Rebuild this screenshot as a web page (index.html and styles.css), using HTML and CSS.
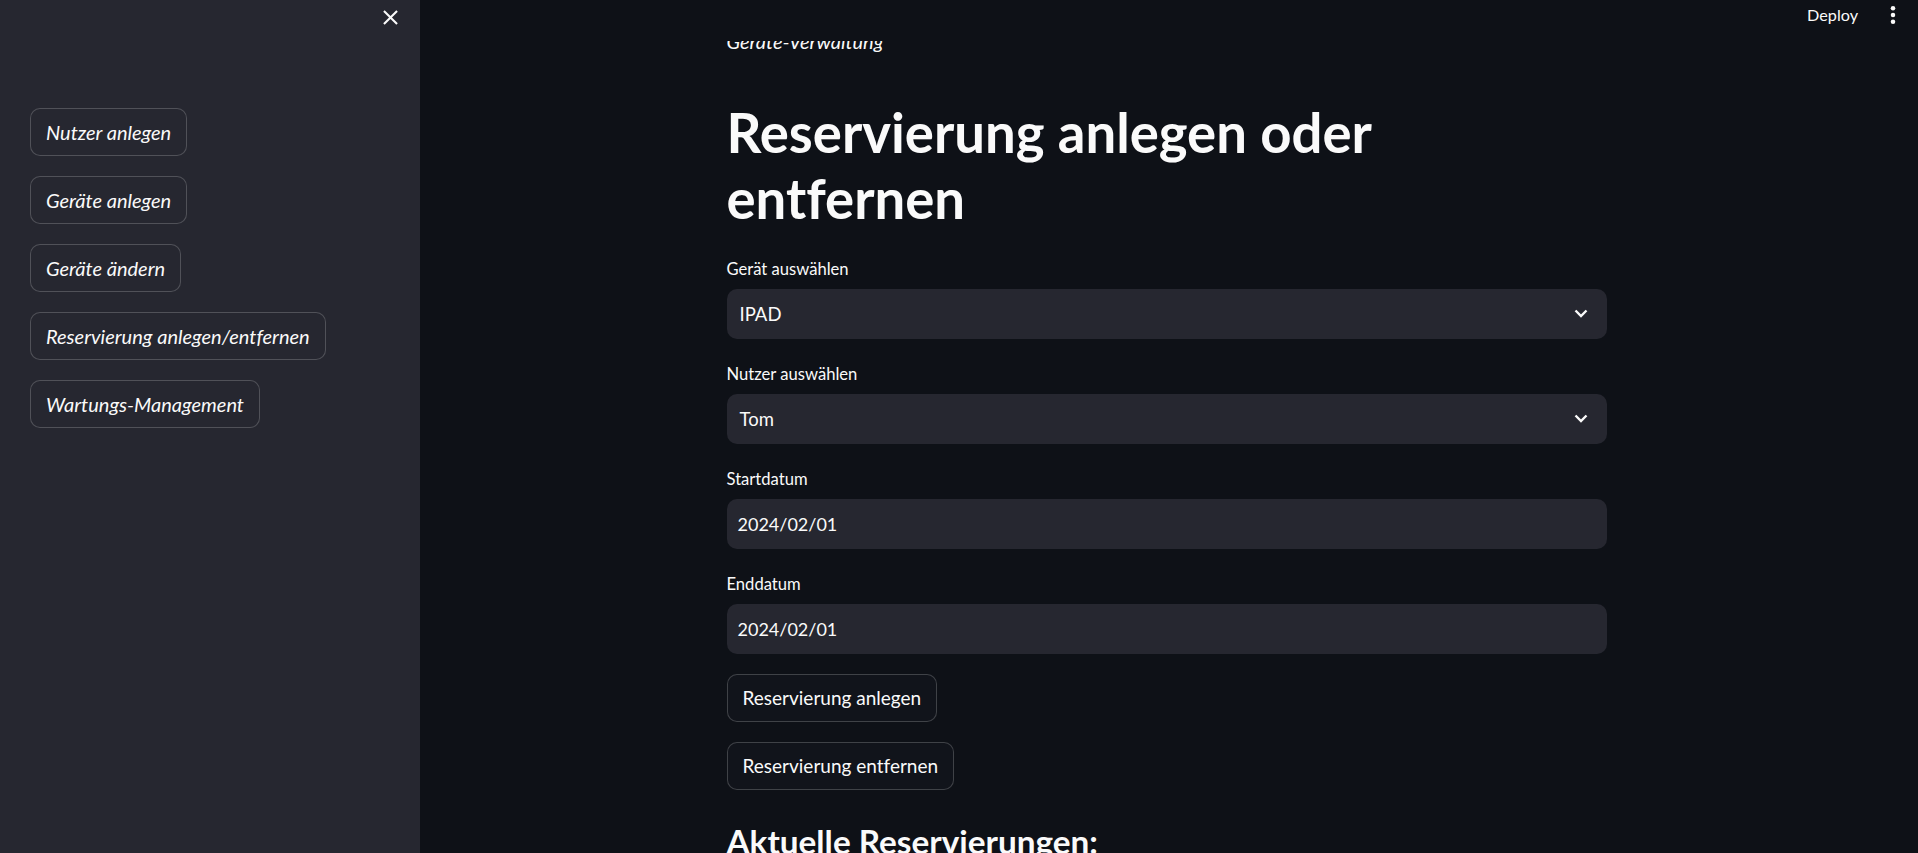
FILE: index.html
```html
<!DOCTYPE html>
<html lang="de">
<head>
<meta charset="utf-8">
<title>Geräte-Verwaltung</title>
<link rel="stylesheet" href="styles.css">
</head>
<body>
<div class="app">
  <aside class="sidebar">
    <div class="sidebar-top">
      <button class="close-btn" aria-label="Schließen">
        <svg viewBox="0 0 24 24" width="25" height="25"><path fill="#fafafa" d="M19 6.41L17.59 5 12 10.59 6.41 5 5 6.41 10.59 12 5 17.59 6.41 19 12 13.41 17.59 19 19 17.59 13.41 12z"/></svg>
      </button>
    </div>
    <nav class="nav">
      <button class="nav-btn">Nutzer anlegen</button>
      <button class="nav-btn">Geräte anlegen</button>
      <button class="nav-btn">Geräte ändern</button>
      <button class="nav-btn">Reservierung anlegen/entfernen</button>
      <button class="nav-btn">Wartungs-Management</button>
    </nav>
  </aside>
  <main class="main">
    <header class="header">
      <span class="deploy">Deploy</span>
      <svg class="menu" viewBox="0 0 24 24" width="26" height="26"><circle cx="12" cy="5.8" r="2.1" fill="#fafafa"/><circle cx="12" cy="12" r="2.1" fill="#fafafa"/><circle cx="12" cy="18.2" r="2.1" fill="#fafafa"/></svg>
    </header>
    <div class="content">
      <p class="caption">Geräte-Verwaltung</p>
      <h1 class="title">Reservierung anlegen oder entfernen</h1>
      <div class="field">
        <label class="label">Gerät auswählen</label>
        <div class="control select"><span>IPAD</span><svg class="chev" viewBox="0 0 14 9" width="14" height="9"><path d="M1.5 1.5 L7 7 L12.5 1.5" fill="none" stroke="#fafafa" stroke-width="2.4"/></svg></div>
      </div>
      <div class="field">
        <label class="label">Nutzer auswählen</label>
        <div class="control select"><span>Tom</span><svg class="chev" viewBox="0 0 14 9" width="14" height="9"><path d="M1.5 1.5 L7 7 L12.5 1.5" fill="none" stroke="#fafafa" stroke-width="2.4"/></svg></div>
      </div>
      <div class="field">
        <label class="label">Startdatum</label>
        <div class="control date"><span>2024/02/01</span></div>
      </div>
      <div class="field">
        <label class="label">Enddatum</label>
        <div class="control date"><span>2024/02/01</span></div>
      </div>
      <button class="btn">Reservierung anlegen</button>
      <button class="btn">Reservierung entfernen</button>
      <h3 class="subtitle">Aktuelle Reservierungen:</h3>
    </div>
  </main>
</div>
</body>
</html>
```
FILE: styles.css
```css
* { box-sizing: border-box; }
html, body { margin: 0; padding: 0; height: 100%; }
body {
  font-family: Lato, "Noto Sans", sans-serif;
  font-variant-ligatures: none;
  color: #fafafa;
  background: #0e1117;
  overflow: hidden;
}
.app {
  display: flex;
  height: 853px;
}
.sidebar {
  width: 420px;
  flex: 0 0 420px;
  background: #262730;
  display: flex;
  flex-direction: column;
}
.sidebar-top {
  display: flex;
  justify-content: flex-end;
  padding: 5px 17px 0 0;
  height: 108px;
}
.close-btn {
  background: none;
  border: 0;
  padding: 0;
  width: 25px;
  height: 25px;
  display: block;
}
.close-btn svg { display: block; }
.nav {
  display: flex;
  flex-direction: column;
  align-items: flex-start;
  gap: 20px;
  padding-left: 30px;
}
.nav-btn {
  font-family: Lato, "Noto Sans", sans-serif;
  font-variant-ligatures: none;
  font-style: italic;
  font-size: 20px;
  color: #fafafa;
  background: #262730;
  border: 1px solid rgba(250, 250, 250, 0.2);
  border-radius: 10px;
  height: 48px;
  padding: 0 15px;
  line-height: 1;
}
.main {
  flex: 1;
  position: relative;
  overflow: hidden;
  padding-right: 5px;
}
.header {
  position: absolute;
  top: 0;
  left: 0;
  right: 0;
  height: 41px;
  background: #0e1117;
  display: flex;
  justify-content: flex-end;
  align-items: flex-start;
  padding: 2px 12px 0 0;
  z-index: 2;
}
.deploy {
  font-size: 16.2px;
  line-height: 26px;
  margin-right: 22px;
}
.menu { display: block; }
.content {
  width: 880px;
  margin: 0 auto;
  padding-top: 25.5px;
  display: flex;
  flex-direction: column;
  align-items: flex-start;
}
.caption {
  margin: 0 0 43.7px;
  font-style: italic;
  font-size: 20px;
  line-height: 30px;
}
.title {
  margin: 0 0 22.8px;
  font-size: 54.5px;
  font-weight: 700;
  line-height: 66px;
}
.field {
  width: 100%;
  margin-bottom: 20px;
}
.label {
  display: block;
  font-size: 16.6px;
  line-height: 30px;
  margin-bottom: 5px;
}
.control {
  height: 50px;
  border-radius: 10px;
  background: #262730;
  display: flex;
  align-items: center;
  font-size: 18.5px;
}
.select {
  justify-content: space-between;
  padding: 0 19px 0 13px;
}
.date {
  padding: 0 11px;
  font-size: 18px;
}
.chev { display: block; }
.btn {
  font-family: Lato, "Noto Sans", sans-serif;
  font-variant-ligatures: none;
  font-size: 19px;
  color: #fafafa;
  background: #11141b;
  border: 1px solid rgba(250, 250, 250, 0.2);
  border-radius: 10px;
  height: 48px;
  padding: 0 15px;
  margin-bottom: 20px;
  line-height: 1;
}
.subtitle {
  margin: 10px 0 0;
  font-size: 33.3px;
  font-weight: 700;
  line-height: 42px;
}
```
